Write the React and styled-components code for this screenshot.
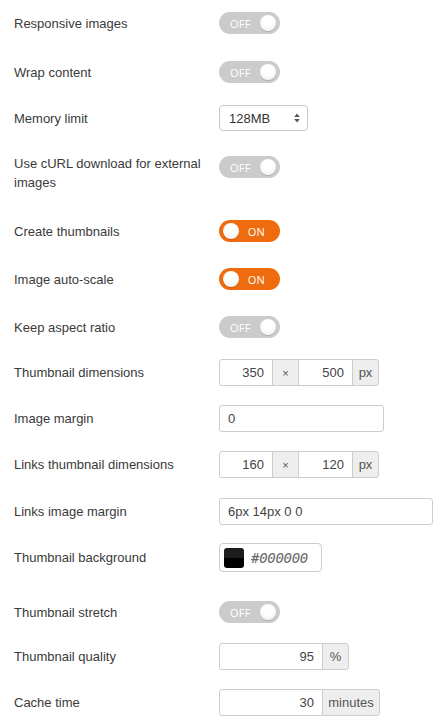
import styled, { createGlobalStyle } from "styled-components";

const GlobalStyle = createGlobalStyle`
  body {
    margin: 0;
    background: #fff;
    font-family: "Liberation Sans", Arial, sans-serif;
    color: #333;
  }
`;

const Page = styled.div`
  display: flex;
  flex-direction: column;
  padding-top: 12px;
  width: 443px;
`;

const Row = styled.div`
  display: flex;
  align-items: ${(p) => (p.$top ? "flex-start" : "center")};
  margin-top: ${(p) => p.$mt || 0}px;
`;

const Label = styled.div`
  width: 191px;
  padding-left: 14px;
  padding-right: 14px;
  font-size: 13px;
  line-height: 19px;
  color: #3a3a3a;
`;

const Toggle = styled.div`
  position: relative;
  width: 61px;
  height: 22px;
  border-radius: 11px;
  background: ${(p) => (p.$on ? "#ef6c0e" : "#cbcbcb")};
  margin-top: ${(p) => p.$mt || 0}px;
  box-sizing: border-box;
  display: flex;
  align-items: center;
  justify-content: ${(p) => (p.$on ? "flex-end" : "flex-start")};
  padding: ${(p) => (p.$on ? "0 15px 0 0" : "0 0 0 11px")};
  color: #fff;
  font-family: "Open Sans", "DejaVu Sans", sans-serif;
  font-size: 11px;
  font-weight: 400;
  letter-spacing: 0.2px;
`;

const Knob = styled.span`
  position: absolute;
  top: 3px;
  ${(p) => (p.$on ? "left: 4px;" : "right: 4px;")}
  width: 16px;
  height: 16px;
  border-radius: 50%;
  background: radial-gradient(circle at 50% 35%, #ffffff 40%, #e9e9e9 100%);
  box-shadow: 0 1px 1px rgba(0, 0, 0, 0.15);
`;

const Select = styled.div`
  width: 89px;
  height: 26px;
  box-sizing: border-box;
  border: 1px solid #c8c8c8;
  border-radius: 4px;
  display: flex;
  align-items: center;
  justify-content: space-between;
  padding: 0 7px 0 9px;
  font-size: 13px;
  color: #333;
`;

const Arrows = styled.svg`
  width: 6px;
  height: 10px;
`;

const Group = styled.div`
  display: flex;
  height: 27px;
`;

const Field = styled.div`
  width: ${(p) => p.$w}px;
  height: ${(p) => p.$h || 27}px;
  box-sizing: border-box;
  border: 1px solid #cccccc;
  margin-left: ${(p) => (p.$joined ? -1 : 0)}px;
  border-radius: ${(p) => p.$radius || "3px"};
  display: flex;
  align-items: center;
  justify-content: ${(p) => (p.$right ? "flex-end" : "flex-start")};
  padding: 0 8px;
  font-size: 13px;
  color: #444;
  background: #fff;
`;

const Addon = styled.div`
  width: ${(p) => p.$w}px;
  height: 27px;
  box-sizing: border-box;
  border: 1px solid #cccccc;
  margin-left: -1px;
  border-radius: ${(p) => p.$radius || "0"};
  background: #eeeeee;
  display: flex;
  align-items: center;
  justify-content: center;
  font-size: ${(p) => p.$fs || 13}px;
  color: #555;
`;

const ColorBox = styled.div`
  width: 103px;
  height: 29px;
  box-sizing: border-box;
  border: 1px solid #cccccc;
  border-radius: 4px;
  display: flex;
  align-items: center;
  padding-left: 4px;
  gap: 7px;
`;

const Swatch = styled.span`
  width: 20px;
  height: 20px;
  border-radius: 3px;
  background: linear-gradient(#1c1c1c 0 50%, #000 50% 100%);
`;

const ColorText = styled.span`
  font-family: "DejaVu Sans Mono", "Liberation Mono", monospace;
  font-style: italic;
  font-size: 14px;
  color: #666;
  letter-spacing: -0.3px;
`;

function Switch({ on, mt }) {
  return (
    <Toggle $on={on} $mt={mt}>
      <Knob $on={on} />
      {on ? "ON" : "OFF"}
    </Toggle>
  );
}

function Dimensions({ a, b }) {
  return (
    <Group>
      <Field $w={54} $right $radius="3px 0 0 3px">{a}</Field>
      <Addon $w={27} $fs={11}>×</Addon>
      <Field $w={55} $right $joined $radius="0">{b}</Field>
      <Addon $w={27} $radius="0 3px 3px 0">px</Addon>
    </Group>
  );
}

function Suffixed({ value, unit, w }) {
  return (
    <Group>
      <Field $w={104} $right $radius="3px 0 0 3px">{value}</Field>
      <Addon $w={w} $radius="0 3px 3px 0">{unit}</Addon>
    </Group>
  );
}

export default function App() {
  return (
    <>
      <GlobalStyle />
      <Page>
        <Row>
          <Label>Responsive images</Label>
          <Switch />
        </Row>
        <Row $mt={27}>
          <Label>Wrap content</Label>
          <Switch />
        </Row>
        <Row $mt={22}>
          <Label>Memory limit</Label>
          <Select>
            128MB
            <Arrows viewBox="0 0 6 10">
              <path d="M3 0.5 L5.8 4 L0.2 4 Z" fill="#555" />
              <path d="M3 9.5 L5.8 6 L0.2 6 Z" fill="#555" />
            </Arrows>
          </Select>
        </Row>
        <Row $mt={23} $top>
          <Label>Use cURL download for external images</Label>
          <Switch mt={2} />
        </Row>
        <Row $mt={28}>
          <Label>Create thumbnails</Label>
          <Switch on />
        </Row>
        <Row $mt={26}>
          <Label>Image auto-scale</Label>
          <Switch on />
        </Row>
        <Row $mt={26}>
          <Label>Keep aspect ratio</Label>
          <Switch />
        </Row>
        <Row $mt={21}>
          <Label>Thumbnail dimensions</Label>
          <Dimensions a="350" b="500" />
        </Row>
        <Row $mt={19}>
          <Label>Image margin</Label>
          <Field $w={165}>0</Field>
        </Row>
        <Row $mt={19}>
          <Label>Links thumbnail dimensions</Label>
          <Dimensions a="160" b="120" />
        </Row>
        <Row $mt={20}>
          <Label>Links image margin</Label>
          <Field $w={214} $h={27}>6px 14px 0 0</Field>
        </Row>
        <Row $mt={18}>
          <Label>Thumbnail background</Label>
          <ColorBox>
            <Swatch />
            <ColorText>#000000</ColorText>
          </ColorBox>
        </Row>
        <Row $mt={29}>
          <Label>Thumbnail stretch</Label>
          <Switch />
        </Row>
        <Row $mt={20}>
          <Label>Thumbnail quality</Label>
          <Suffixed value="95" unit="%" w={27} />
        </Row>
        <Row $mt={19}>
          <Label>Cache time</Label>
          <Suffixed value="30" unit="minutes" w={58} />
        </Row>
      </Page>
    </>
  );
}
